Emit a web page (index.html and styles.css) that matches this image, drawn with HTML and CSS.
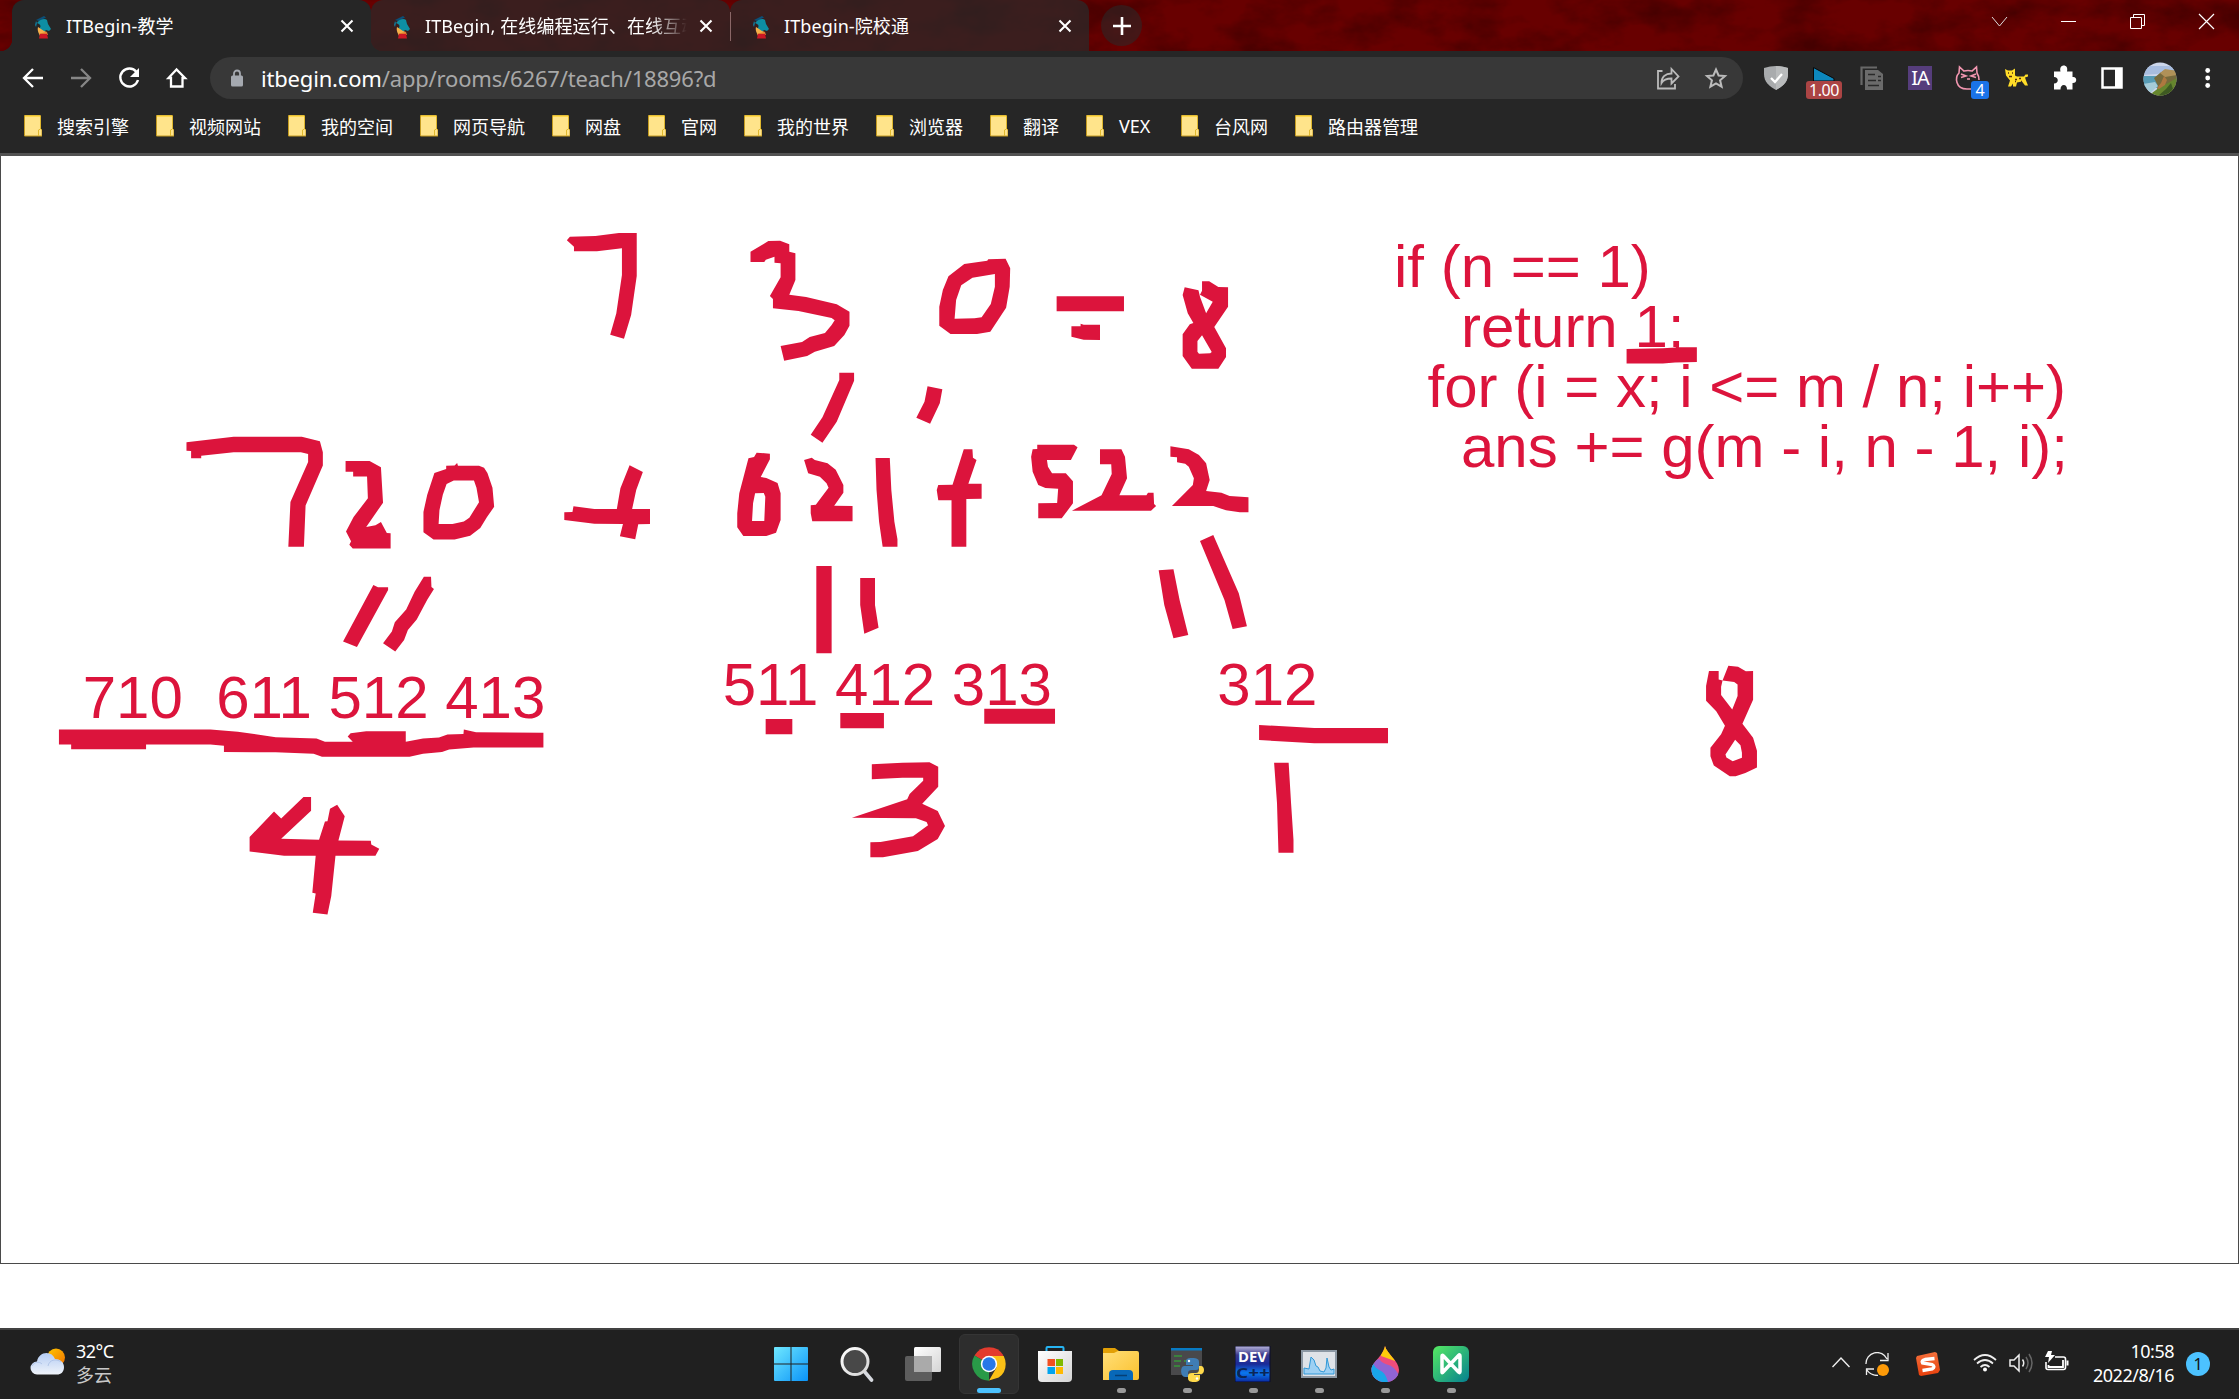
FILE: index.html
```html
<!DOCTYPE html>
<html lang="zh-CN">
<head>
<meta charset="utf-8">
<title>ITBegin-教学</title>
<link rel="stylesheet" href="styles.css">
</head>
<body>
<svg class="defs" width="0" height="0" aria-hidden="true">
  <defs>
    <linearGradient id="win" x1="0" y1="0" x2="1" y2="1"><stop offset="0" stop-color="#6fe8ff"/><stop offset="1" stop-color="#0a93f8"/></linearGradient>
    <linearGradient id="sun" x1="0" y1="0" x2="1" y2="1"><stop offset="0" stop-color="#ffc800"/><stop offset="1" stop-color="#f07000"/></linearGradient>
    <linearGradient id="cloud" x1="0" y1="0" x2="0" y2="1"><stop offset="0" stop-color="#b4ccf4"/><stop offset="1" stop-color="#f0f4fa"/></linearGradient>
    <linearGradient id="white" x1="0" y1="0" x2="1" y2="1"><stop offset="0" stop-color="#fff"/><stop offset="1" stop-color="#d4d4d4"/></linearGradient>
    <linearGradient id="folder" x1="0" y1="0" x2="1" y2="1"><stop offset="0" stop-color="#ffdf78"/><stop offset="1" stop-color="#fbc02d"/></linearGradient>
    <linearGradient id="dev" x1="0" y1="0" x2="0" y2="1"><stop offset="0" stop-color="#b9b6dc"/><stop offset=".25" stop-color="#3a3a8c"/><stop offset=".5" stop-color="#1a2a98"/><stop offset=".75" stop-color="#0a78f0"/><stop offset="1" stop-color="#0b2aa0"/></linearGradient>
    <linearGradient id="green" x1="0" y1="0" x2="1" y2="1"><stop offset="0" stop-color="#56ea62"/><stop offset="1" stop-color="#058090"/></linearGradient>
    <linearGradient id="sogou" x1="0" y1="0" x2="0" y2="1"><stop offset="0" stop-color="#f4703c"/><stop offset="1" stop-color="#e8400c"/></linearGradient>
    <symbol id="favicon" viewBox="0 0 18 24">
      <path d="M2 5 10 1l2 1.500L5 6z" fill="#0b4f78"/><path d="M3 8C6 4 11 3 13 5l1 4 3 5-2 2-3-1-2 2-5-3c2-2 2-4 0-5z" fill="#0d8ea3"/><path d="M2 6 1 10l1 2 1-4z" fill="#117a9c"/><path d="M4 12l6 4 3 1-1 4H6c-1-3-3-5-2-9z" fill="#f5b04a"/><path d="M5.500 18.500 13 17l1 3H6z" fill="#e2762c"/><path d="M6 19h7l1 4.500H5z" fill="#cc1725"/>
    </symbol>
    <symbol id="close" viewBox="0 0 14 14"><path d="M1.500 1.500l11 11m0-11-11 11" stroke="#fff" stroke-width="2.100"/></symbol>
    <symbol id="mark" viewBox="0 0 18 22"><path d="M.5.5h16v13l1.500 1.500v6H.5z" fill="#ffe48b" stroke="#c49b20"/><path d="M16.500 1v13l-2 1v6" stroke="#e0b82e" fill="none"/><path d="M1 1.200h15" stroke="#ffd94a" stroke-width="1.500"/></symbol>
  </defs>
</svg>

<header class="titlebar">
  <svg class="texture" width="2239" height="51">
    <filter id="grain" x="0" y="0" width="100%" height="100%">
      <feTurbulence type="fractalNoise" baseFrequency=".018 .03" numOctaves="5" seed="8"/>
      <feColorMatrix values="0 0 0 0 .06  0 0 0 0 0  0 0 0 0 0  2.200 0 0 0 -.9"/>
    </filter>
    <rect width="2239" height="51" fill="#680000"/>
    <rect width="2239" height="51" filter="url(#grain)"/>
  </svg>
  <nav class="tabs">
    <div class="tab active"><svg class="fav"><use href="#favicon"/></svg><span class="title">ITBegin-教学</span><svg class="x"><use href="#close"/></svg></div>
    <div class="tab"><svg class="fav"><use href="#favicon"/></svg><span class="title fade">ITBegin, 在线编程运行、在线互动</span><svg class="x"><use href="#close"/></svg></div>
    <div class="tab divided"><svg class="fav"><use href="#favicon"/></svg><span class="title">ITbegin-院校通</span><svg class="x"><use href="#close"/></svg></div>
    <span class="newtab"><svg width="18" height="18"><path d="M9 0v18M0 9h18" stroke="#fff" stroke-width="2.600"/></svg></span>
  </nav>
  <div class="controls">
    <svg width="69" height="44"><path d="M27 17l7.500 9 7.500-9" stroke="#ddd" fill="none"/></svg>
    <svg width="69" height="44"><path d="M27 21.500h15" stroke="#fff"/></svg>
    <svg width="69" height="44"><path d="M27.500 17.500h11v11h-11zM30.500 17v-2.500h11v11h-3" stroke="#fff" fill="none"/></svg>
    <svg width="69" height="44"><path d="M27 14l15 15M42 14 27 29" stroke="#fff" stroke-width="1.200"/></svg>
  </div>
</header>

<div class="toolbar">
  <svg width="48" height="48"><path d="M34 24H15m9-9-9 9 9 9" stroke="#fff" stroke-width="2.300" fill="none"/></svg>
  <svg width="48" height="48"><path d="M14 24h19m-9-9 9 9-9 9" stroke="#868686" stroke-width="2.300" fill="none"/></svg>
  <svg width="48" height="48"><path d="M31.500 18A9 9 0 1 0 33 26" stroke="#fff" stroke-width="2.400" fill="none"/><path d="M34 14v9h-9z" fill="#fff"/></svg>
  <svg width="48" height="48"><path d="M23.500 15.500 15.500 24H18v8.500h11.500V24H32z" stroke="#fff" stroke-width="2.300" fill="none"/></svg>
  <div class="omnibox">
    <svg width="12" height="18"><path d="M3 8V4.500a3 3 0 0 1 6 0V8" stroke="#a5a9b0" stroke-width="1.800" fill="none"/><rect y="6.500" width="12" height="11" rx="1.500" fill="#a5a9b0"/></svg>
    <span class="url"><b>itbegin.com</b>/app/rooms/6267/teach/18896?d</span>
    <svg width="48" height="42"><g transform="translate(2.500 0)"><path d="M13 14H8.500v17.500h17V27" stroke="#bbb" stroke-width="1.800" fill="none"/><path d="M12 26c0-6 4-9.500 10-9.500V12l7 7.500-7 7v-5c-5 0-8 1-10 4.500z" stroke="#bbb" stroke-width="1.800" fill="none"/></g></svg>
    <svg width="48" height="42"><path d="M21 12.500l2.600 6 6.400.6-4.900 4.200 1.500 6.400-5.600-3.400-5.600 3.400 1.500-6.400-4.900-4.200 6.400-.6z" stroke="#bbb" stroke-width="2" fill="none"/></svg>
  </div>
  <div class="extensions">
    <svg width="48" height="48"><path d="M12 14q12-4 24 0v6c0 8-5 12-12 16-7-4-12-8-12-16z" fill="#a9abad"/><path d="M24 12q6 0 12 2v6c0 8-5 12-12 16z" fill="#b9bbbc"/><path d="M19 24l4 4 7-8" stroke="#fff" stroke-width="2.300" fill="none"/></svg>
    <div class="ext"><svg width="48" height="48"><path d="M13.500 13.500 34 24.500V27H13.500z" fill="#0d87bd" stroke="#080808"/></svg><span class="badge red">1.00</span></div>
    <svg width="48" height="48"><path d="M13.500 31V13.500H29" stroke="#686868" stroke-width="2.200" fill="none"/><path d="M17 16h13l5 4v16H17z" fill="#6b6b6b"/><path d="M20 20.500h7m3 2h3M20 26.500h8m2 0h3M20 31.500h11" stroke="#292929" stroke-width="1.700"/></svg>
    <span class="ia">IA</span>
    <div class="ext"><svg width="48" height="48"><path d="M27 35h-4c-12 0-12-12-8-16l.5-6 4.500 4q4-1 8 0l4.500-4 .5 6q2 3 2 7M17 20l5 2-5 1.500m15-3.500-5 2 5 1.500m-9 1.500h3" stroke="#f296b0" stroke-width="1.600" fill="none"/></svg><span class="badge blue">4</span></div>
    <svg width="48" height="48"><path d="M13 15l3 1.500h4l3-2v7l2 1h7l1.500-2H36v2l-3 1 1 3 2 5h-3l-3-4-5 1-1 4h-3v-3l-2 3h-3l2-6-4-5z" fill="#ffdd28"/><path d="M16 19h1m3 0h1m-4 3.500h3m3 3h2m2-1h2m-6 3h1m5 0h1" stroke="#542e12" stroke-width="1.500"/></svg>
    <svg width="48" height="48"><path d="M13 17h6.500c-1-4 1-6 3.300-6s4.200 2 3.200 6h5.500v5.500c5-1 5 6.500 0 6V35h-5.500c0-3-1.200-4.500-3.200-4.500S19.500 32 19.500 35H13v-6c5 0 5-6.500 0-6.500z" fill="#fff" transform="translate(1 .5)"/></svg>
    <svg width="48" height="48"><path d="M14.500 14.500h19v19h-19z" stroke="#fff" stroke-width="2.500" fill="none"/><path d="M27 14h7v20h-7z" fill="#fff"/></svg>
    <svg width="48" height="48"><clipPath id="round"><circle cx="24" cy="25" r="16.500"/></clipPath><g clip-path="url(#round)"><path d="M7 8h34v34H7z" fill="#cdd6ea"/><path d="M7 12h34v4l-20 4-14 1z" fill="#a8bddf"/><path d="M7 22h20v12H7z" fill="#579cb6"/><path d="M7 30l12-2 3 4-9 8H7z" fill="#a5cbd8"/><path d="M18 24l6-5 5-3 12 1v28H18l4-13z" fill="#766a3c"/><path d="M24 19l5-4 12 2v4l-12 2z" fill="#b09158"/><path d="M12 42l12-9 8-4 9-5v18H11z" fill="#66862e"/><path d="M28 22l3 4-2 5-6 4-2-1 4-5z" fill="#ae783f"/><path d="M22 42l8-7 5-6 2 6-6 7z" fill="#3e5a22"/></g></svg>
    <svg width="48" height="48"><g fill="#fff"><circle cx="23.700" cy="16.500" r="2.400"/><circle cx="23.700" cy="24" r="2.400"/><circle cx="23.700" cy="31.500" r="2.400"/></g></svg>
  </div>
</div>

<nav class="bookmarks">
  <span><svg><use href="#mark"/></svg>搜索引擎</span>
  <span><svg><use href="#mark"/></svg>视频网站</span>
  <span><svg><use href="#mark"/></svg>我的空间</span>
  <span><svg><use href="#mark"/></svg>网页导航</span>
  <span><svg><use href="#mark"/></svg>网盘</span>
  <span><svg><use href="#mark"/></svg>官网</span>
  <span><svg><use href="#mark"/></svg>我的世界</span>
  <span><svg><use href="#mark"/></svg>浏览器</span>
  <span><svg><use href="#mark"/></svg>翻译</span>
  <span class="latin"><svg><use href="#mark"/></svg>VEX</span>
  <span><svg><use href="#mark"/></svg>台风网</span>
  <span><svg><use href="#mark"/></svg>路由器管理</span>
</nav>

<main class="page">
<svg class="board" viewBox="0 156 2239 1108" width="2239" height="1108">
  <g class="typed">
    <text x="1394" y="286.800">if (n == 1)</text>
    <text x="1461" y="346.800">return 1;</text>
    <text x="1427.500" y="406.800">for (i = x; i &lt;= m / n; i++)</text>
    <text x="1461" y="466.800">ans += g(m - i, n - 1, i);</text>
    <text x="82.700" y="718.300">710  611 512 413</text>
    <text x="722.700" y="705.300">511 412 313</text>
    <text x="1217.300" y="705.300">312</text>
  </g>
  <g class="ink" transform="translate(500 200) scale(.5102 .33333)">
    <path d="M131 121 137 110 187 108 233 99 268 99 268 228 257 345 243 416 216 404 228 340 239 225 239 145 190 154 145 154 145 140z"/>
    <path d="M491 155 510 138 526 123 549 122 567 133 567 155 579 160 579 240 567 284 600 291 660 313 685 335 685 377 675 405 655 438 617 455 602 468 557 482 550 438 592 426 607 411 637 399 650 375 656 361 650 354 585 333 535 325 535 297 529 288 550 232 550 190 538 188 538 170 521 179 518 186 491 186z"/>
    <path d="M957 178 991 176 1000 205 999 260 992 323 961 395 935 402 883 402 861 377 861 320 868 270 879 229 910 192 955 182zM970 222 926 233 904 256 894 300 891 356 930 355 944 352 962 312 970 260z"/>
    <path d="M1091 289H1223V334H1091zM1120 379 1138 379 1138 371 1144 374 1176 374 1176 420 1144 419 1120 410z"/>
    <path d="M1342 262 1369 271 1372 290 1384 340 1397 305 1372 284 1376 272 1376 244 1390 244 1408 261 1427 262 1427 320 1400 381 1423 445 1423 471 1408 506 1356 506 1338 468 1338 403 1352 373 1359 369 1348 340 1338 285zM1376 406 1367 423 1367 455 1370 461 1392 460 1395 456z"/>
    <path d="M665 518 694 518 694 542 660 665 632 728 609 704 632 652 665 540zM838 559 867 568 862 610 843 671 816 653 832 605z"/>
    <path d="M254 796 280 816 267 870 259 927 294 927 294 972 271 973 265 1018 235 1009 241 972 185 971 126 960 126 937 142 936 144 919 185 927 229 927 236 865z"/>
    <path d="M503 758 529 761 529 778 511 831 522 834 544 849 550 880 550 960 541 998 522 1008 477 1008 465 982 465 940 469 880 487 775 498 771zM500 880 517 879 520 890 518 963 494 963 496 910z"/>
    <path d="M596 780 611 773 617 780 642 790 658 809 673 855 673 878 655 917 691 918 691 964 612 964 609 940 609 916 619 914 644 863 640 850 627 830 604 820z"/>
    <path d="M736 774 764 774 767 870 773 965 779 1018 779 1040 750 1040 743 965 738 870z"/>
    <path d="M909 748 926 748 927 773 934 780 918 851 944 851 944 896 914 897 914 1040 885 1040 885 901 859 901 856 870 859 855 887 854z"/>
    <path d="M1053 734 1125 734 1132 742 1119 780 1072 780 1074 800 1082 820 1109 820 1123 844 1123 910 1101 955 1055 955 1055 910 1092 909 1094 866 1069 864 1055 855 1044 815 1041 770 1044 748 1053 747z"/>
    <path d="M1176 748 1218 748 1225 770 1229 835 1214 886 1267 886 1270 878 1281 878 1282 912 1286 918 1276 932 1121 932 1179 886 1199 822 1198 793 1176 793z"/>
    <path d="M1314 739 1350 748 1370 765 1384 790 1391 840 1384 873 1414 878 1430 888 1467 892 1467 937 1450 937 1423 931 1398 918 1317 918 1358 855 1360 835 1350 800 1343 791 1327 787 1327 772 1314 770z"/>
    <path d="M620 1098H650V1360H620zM706 1134 735 1134 735 1215 742 1283 714 1301 706 1215z"/>
    <path d="M1291 1111 1320 1108 1332 1200 1349 1305 1320 1315 1302 1215zM1372 1023 1398 1005 1448 1180 1464 1279 1436 1287 1420 1200z"/>
  </g>
  <g class="ink" transform="translate(40 400) scale(.42091 .34439)">
    <path d="M348 123 460 107 622 107 665 120 672 152 672 190 631 306 627 426 590 426 595 296 637 180 637 157 620 152 460 152 383 162 383 169 359 169 359 148 348 147z"/>
    <path d="M726 177 783 177 810 195 815 298 775 369 797 364 810 354 824 386 833 387 833 431 743 431 735 420 739 410 727 382 745 340 779 285 777 222 744 222 744 208 726 208z"/>
    <path d="M965 191 985 190 991 183 993 191 1043 191 1055 197 1063 212 1075 255 1079 310 1062 340 1046 372 1022 394 985 405 935 405 911 384 911 325 920 275 937 212 965 200zM983 234 1031 234 1037 255 1043 297 1020 342 1007 353 980 360 947 360 949 320 957 275 966 244z"/>
    <path d="M792 537 803 544 827 544 827 552 753 717 720 701zM912 513 929 513 930 543 936 549 920 580 895 637 874 668 865 697 844 730 815 706 836 672 843 645 870 608 890 557z"/>
    <path d="M45 957 405 957 470 963 560 979 657 983 677 992 743 992 731 977 738 968 775 962 869 962 869 992 910 983 948 980 968 971 1006 970 1007 957 1036 965 1196 966 1196 1009 1030 1009 972 1015 955 1022 910 1027 878 1036 670 1036 650 1027 560 1023 437 1022 437 1004 405 1000 252 1000 252 1014 74 1014 74 1000 45 1000z"/>
    <path d="M626 1153 644 1153 644 1193 573 1274 663 1277 677 1224 683 1223 689 1187 706 1175 724 1209 709 1279 786 1280 787 1291 806 1303 797 1323 702 1323 692 1440 683 1494 648 1489 655 1433 647 1431 655 1323 580 1323 498 1311 498 1269 556 1195 573 1215z"/>
  </g>
  <g class="ink" transform="translate(660 500) scale(.48469 .33333)">
    <path d="M218 657H273V703H218zM372 639H462V685H372zM669 626H815V671H669z"/>
    <path d="M1236 675 1350 684 1502 684 1502 730 1350 730 1236 720z"/>
    <path d="M437 793 500 788 556 787 574 800 574 860 541 911 573 933 588 978 573 1017 532 1053 460 1072 434 1072 434 1027 455 1026 522 1009 553 976 550 966 528 955 396 953 510 898 515 882 543 842 543 833 500 833 437 838z"/>
    <path d="M1267 788 1297 788 1302 910 1307 1020 1307 1058 1276 1058 1273 910z"/>
  </g>
  <g class="ink" transform="translate(1360 220) scale(.48469 .3699)">
    <path d="M550 349 625 347 660 344 695 344 695 384 650 385 625 388 550 388z"/>
    <path d="M720 1219 740 1219 740 1242 748 1245 760 1205 780 1208 796 1220 811 1219 811 1297 789 1362 811 1400 819 1435 819 1480 795 1495 775 1504 763 1504 730 1475 723 1450 723 1427 745 1390 753 1367 735 1328 714 1300 714 1260zM748 1245 772 1249 779 1256 779 1287 768 1323 745 1284 745 1262zM774 1405 754 1445 756 1453 769 1463 788 1454 788 1440 785 1420z"/>
  </g>
</svg>
</main>

<footer class="taskbar">
  <div class="weather">
    <svg width="36" height="28"><circle cx="26" cy="9.500" r="9" fill="url(#sun)"/><path d="M7 26.500a6.500 6.500 0 0 1 0-13C8 8 12 5 16.500 5c4 0 7 2 8.500 6 5 0 9 3 9 8s-3 7.500-7 7.500z" fill="url(#cloud)"/><path d="M2 18c2-4 7-5 10-2m6 2c1-6 8-8 13-4" stroke="#a9bfe4" stroke-width=".8" fill="none"/></svg>
    <div class="lines"><span>32°C</span><span class="dim">多云</span></div>
  </div>
  <div class="apps">
    <div class="app"><svg width="36" height="36"><path d="M1 2q0-1 1-1h15.500v16.500H1zM18.500 1H34q1 0 1 1v15.500H18.500zM1 18.500h16.500V35H2q-1 0-1-1zM18.500 18.500H35V34q0 1-1 1H18.500z" fill="url(#win)"/></svg></div>
    <div class="app"><svg width="36" height="36"><path d="M25 25l7.500 9" stroke="#d6d9df" stroke-width="3.600" stroke-linecap="round"/><circle cx="16" cy="15.500" r="13" fill="#484848" stroke="url(#white)" stroke-width="3"/></svg></div>
    <div class="app"><svg width="36" height="36"><rect x="0" y="10" width="27" height="25" rx="2" fill="#5d5d5d"/><rect x="9" y="1" width="27" height="25" rx="1.500" fill="url(#white)"/><path d="M9 10h18v16H9z" fill="#aaa"/></svg></div>
    <div class="app current"><svg width="36" height="36"><path d="M18 18 3.500 9.600A16.700 16.700 0 0 1 32.500 9.600z" fill="#e33b2e"/><path d="M18 18v16.700A16.700 16.700 0 0 1 3.500 9.600z" fill="#299a48"/><path d="M18 10h14.700q2 4 2 8 0 9-7 13.500L18 34.500l7.500-13z" fill="#fbc116"/><circle cx="18" cy="18" r="8.200" fill="#fff"/><circle cx="18" cy="18" r="6.700" fill="#2878e8"/></svg></div>
    <div class="app"><svg width="36" height="36"><path d="M9.500 7V2q0-1 1-1h15q1 0 1 1v5" stroke="#26b4f2" stroke-width="2" fill="none"/><path d="M1 5h34v27q0 4-4 4H5q-4 0-4-4z" fill="url(#white)"/><path d="M10.500 13H18v7h-7.500z" fill="#f25022"/><path d="M19 13h7v7h-7z" fill="#7fba00"/><path d="M10.500 21H18v7h-7.500z" fill="#00a4ef"/><path d="M19 21h7v7h-7z" fill="#ffb900"/></svg></div>
    <div class="app open"><svg width="36" height="36"><path d="M0 3q0-1 1-1h11l4 3v5H0z" fill="#e2a006"/><path d="M0 7h11l4-2h19q2 0 2 2v25q0 2-2 2H0z" fill="url(#folder)"/><path d="M6 34v-6q0-4 4-4h16q4 0 4 4v6z" fill="#0868b8"/><path d="M12 29.500h12" stroke="#053f75" stroke-width="1.500"/></svg></div>
    <div class="app open"><svg width="36" height="36"><path d="M2 2h31v27H2z" fill="#49494b"/><path d="M2 2h31v2.500H2z" fill="#087bc4"/><path d="M5 10h8M5 15h7m3 0h3M5 20h6" stroke="#37953a" stroke-width="1.500"/><path d="M23 12c-6 0-6 2-6 4v3h7v1h-9c-4 0-4 11 1 11h3v-4q0-3 4-3h4q3 0 3-3v-5c0-3-2-4-7-4z" fill="#3f7db4"/><path d="M25 36c5 0 6-2 6-4v-3h-6v-1h7c4 0 4-8 0-8h-2v3q0 4-3 4h-4q-4 0-4 3v2c0 3 2 4 6 4z" fill="#ffd94b"/><circle cx="20" cy="15" r="1.200" fill="#fff"/><circle cx="28" cy="32.500" r="1.200" fill="#fff"/></svg></div>
    <div class="app open"><svg width="36" height="36"><rect width="35" height="36" fill="url(#dev)" stroke="#0a0d2c"/><text x="17.500" y="15.500" class="devname" textLength="29" lengthAdjust="spacingAndGlyphs">DEV</text><text x="18" y="32" class="devlang" textLength="34" lengthAdjust="spacingAndGlyphs">C++</text></svg></div>
    <div class="app open"><svg width="36" height="36"><path d="M1 5h34v26H1z" fill="#dfe3e8" stroke="#8c98a4" stroke-width="2"/><path d="M3 28v-6l5 1 2-12 3 3 2 6 2 1 2 4 4 1 2-4 1-10 2 9 2 3 3-1v5z" fill="#9dd0f3" stroke="#3098d7"/></svg></div>
    <div class="app open"><svg width="36" height="36"><clipPath id="drop"><path d="M18 0C20 8 32 15 32 24a13.500 12 0 0 1-27.500 0C4.500 16 15 12 18 0z"/></clipPath><g clip-path="url(#drop)"><path d="M0 0h36v36H0z" fill="#ef4d7c"/><path d="M15 0h8l5 15-14-5z" fill="#ffcc0a"/><path d="M0 17 12 13c6 8 12 3 18 13l6 10H0z" fill="#9064d4"/><path d="M0 17h6c4 10 11 4 15 19H0z" fill="#19a6ea"/></g></svg></div>
    <div class="app open"><svg width="36" height="36"><rect width="36" height="36" rx="6" fill="url(#green)"/><path d="M9 26V10q0-1.500 1.500 0l15 16q1.500 1.500 1.500-.5V10q0-2-1.500-.5l-15 16Q9 27.500 9 26z" stroke="#fff" stroke-width="3.500" fill="none"/></svg></div>
  </div>
  <div class="tray">
    <svg width="18" height="12"><path d="M.5 11 9 2l8.500 9" stroke="#eee" stroke-width="1.400" fill="none"/></svg>
    <svg width="24" height="24" class="sync"><path d="M1 12A11 11 0 0 1 22 7M15 8.500h8V1M1 17h8m-7.500-.5V23m0-5.500q4 6 11.500 6" stroke="#eee" stroke-width="1.300" fill="none"/><circle cx="18" cy="18" r="6" fill="#fd9a08"/></svg>
    <svg width="24" height="24" class="sogou"><path d="M1 4 19 0l2 1 3 17-2 3L5 24l-2-1L0 6z" fill="url(#sogou)"/><path d="M18.500 6.500 9 7.500q-4 1-2.500 3.500l9.500 1.500q4 2 0 4.500l-9.500 1.500" stroke="#fff" stroke-width="3.300" fill="none"/></svg>
    <svg width="24" height="18" class="wifi"><path d="M1 6Q12-4 23 6M4 9.500q8-7 16 0M7.500 13q4.500-4 9 0" stroke="#eee" stroke-width="1.700" fill="none"/><circle cx="12" cy="15.500" r="2" fill="#fff"/></svg>
    <svg width="24" height="20" class="volume"><path d="M1 7h4l5-5v16l-5-5H1z" stroke="#eee" stroke-width="1.500" fill="none"/><path d="M13.500 6.500q2.500 3.500 0 7" stroke="#eee" stroke-width="1.500" fill="none"/><path d="M17 4q4 6 0 12M20 1q6 9 0 18" stroke="#666" stroke-width="1.500" fill="none"/></svg>
    <svg width="24" height="21" class="battery"><path d="M10 6h8.500q2 0 2 2v8.500q0 2-2 2H3q-2 0-2-2V11" stroke="#fff" stroke-width="1.600" fill="none"/><path d="M3.500 14v2h14.500v-7" stroke="#fff" stroke-width="1.800" fill="none"/><path d="M22.500 9.500v5" stroke="#fff" stroke-width="2"/><path d="M3 0h4L6 4h4L3 12l1-6H0z" fill="#fff"/></svg>
    <div class="clock lines"><span>10:58</span><span>2022/8/16</span></div>
    <span class="count">1</span>
  </div>
</footer>
</body>
</html>
```
FILE: styles.css
```css
* { box-sizing: border-box; }

body {
  margin: 0;
  width: 2239px;
  height: 1399px;
  display: flex;
  flex-direction: column;
  overflow: hidden;
  background: #fff;
  color: #fff;
  font: 18px "Noto Sans", "Noto Sans CJK SC", sans-serif;
}

svg { display: block; flex: none; }
.defs { position: absolute; }

/* Title bar and tabs */
.titlebar {
  position: relative;
  height: 51px;
  display: flex;
  justify-content: space-between;
  overflow: hidden;
}
.texture { position: absolute; left: 0; top: 0; }
.tabs { position: relative; display: flex; padding-left: 12px; }
.tab {
  position: relative;
  width: 359px;
  display: flex;
  align-items: center;
  padding: 0 17px 0 22px;
  border-radius: 12px 12px 0 0;
  background: rgba(41, 41, 41, .72);
}
.tab.active { background: #262626; z-index: 1; }
.tab.active::before,
.tab.active::after {
  content: "";
  position: absolute;
  bottom: 0;
  width: 12px;
  height: 12px;
}
.tab.active::before { left: -12px; background: radial-gradient(circle at 0 0, transparent 12px, #262626 12.5px); }
.tab.active::after { right: -12px; background: radial-gradient(circle at 100% 0, transparent 12px, #262626 12.5px); }
.tab.divided::before {
  content: "";
  position: absolute;
  left: 0;
  top: 12px;
  width: 1px;
  height: 29px;
  background: #8a6767;
}
.fav { width: 18px; height: 24px; margin: 2px 14px 0 0; }
.title { flex: 1; overflow: hidden; white-space: nowrap; letter-spacing: .1px; padding-bottom: 1px; }
.title.fade { mask-image: linear-gradient(90deg, #000 86%, transparent); }
.x { width: 14px; height: 14px; margin-left: 12px; }
.newtab {
  width: 41px;
  height: 41px;
  margin: 5px 0 0 12px;
  border-radius: 50%;
  background: rgba(41, 41, 41, .55);
  display: grid;
  place-items: center;
}
.controls { position: relative; display: flex; margin-right: -2px; }

/* Navigation row */
.toolbar {
  height: 54px;
  display: flex;
  align-items: center;
  padding-left: 9px;
  background: #262626;
}
.omnibox {
  width: 1533px;
  height: 42px;
  margin: 0 9px;
  padding: 0 0 0 21px;
  border-radius: 21px;
  background: #383838;
  display: flex;
  align-items: center;
}
.url { flex: 1; margin-left: 18px; padding-bottom: 1px; font-size: 22px; letter-spacing: -.18px; color: #a8a8a8; }
.url b { font-weight: 400; color: #fff; }
.extensions { display: flex; align-items: center; }
.ext { position: relative; }
.badge {
  position: absolute;
  top: 27px;
  height: 18px;
  border-radius: 3px;
  font-size: 16px;
  line-height: 18px;
  letter-spacing: -.4px;
  text-align: center;
}
.badge.red { left: 6px; width: 36px; background: #ab4444; }
.badge.blue { left: 27px; width: 18px; background: #1a73e8; }
.ia {
  width: 24px;
  height: 24px;
  margin: 0 12px;
  background: #563d7c;
  font-size: 20px;
  line-height: 24px;
  letter-spacing: -1px;
  text-align: center;
}

/* Bookmarks */
.bookmarks {
  height: 51px;
  display: flex;
  align-items: center;
  gap: 27px;
  padding: 0 0 7px 24px;
  border-bottom: 3px solid #525252;
  background: #262626;
  white-space: nowrap;
}
.bookmarks span { display: flex; align-items: center; height: 26px; }
.bookmarks svg { width: 18px; height: 22px; margin-right: 15px; }
.bookmarks .latin { width: 68px; }

/* Whiteboard */
.page { height: 1172px; background: #fff; }
.board {
  box-shadow: inset 1px 0 #4a4a4a, inset -1px 0 #4a4a4a, inset 0 -1px #4a4a4a;
}
.typed {
  fill: #dc143c;
  font: 60px "Liberation Sans", Arial, sans-serif;
  white-space: pre;
}
.typed text { white-space: pre; }
.ink { fill: #dc143c; fill-rule: evenodd; }

/* Taskbar */
.taskbar {
  height: 71px;
  display: grid;
  grid-template-columns: 758px 726px 1fr;
  border-top: 2px solid #414141;
  background: #202020;
}
.weather { display: flex; padding: 14px 0 0 30px; }
.weather svg { margin: 4px 10px 0 0; }
.lines { display: flex; flex-direction: column; line-height: 24px; letter-spacing: -.5px; }
.weather .lines, .clock { margin-top: -5px; }
.dim { color: #c8c8c8; letter-spacing: 0; }
.apps { display: flex; }
.app {
  position: relative;
  width: 60px;
  height: 60px;
  margin: 4px 3px;
  display: grid;
  place-items: center;
  border-radius: 6px;
}
.app.current { background: #2d2d2d; border: 1px solid #353535; }
.app.open::after,
.app.current::after {
  content: "";
  position: absolute;
  left: 50%;
  bottom: 1px;
  width: 9px;
  height: 5px;
  margin-left: -4.5px;
  border-radius: 3px;
  background: #999;
}
.app.current::after { width: 24px; margin-left: -12px; bottom: 0; background: #4cc2ff; }
.devname { fill: #fff; font: 700 15px "Open Sans", sans-serif; text-anchor: middle; }
.devlang { fill: #0b2656; font: 700 15px "Open Sans", sans-serif; text-anchor: middle; }
.tray { display: flex; align-items: flex-start; padding: 14px 0 0 348px; }
.tray > svg:first-child { margin-top: 12px; }
.sync { margin: 8px 0 0 15px; }
.sogou { margin: 8px 0 0 27px; }
.wifi { margin: 10px 0 0 33px; }
.volume { margin: 9px 0 0 12px; }
.battery { margin: 7px 0 0 12px; }
.clock { width: 105px; text-align: right; }
.count {
  width: 24px;
  height: 24px;
  margin: 8px 0 0 12px;
  border-radius: 50%;
  background: #4cc2ff;
  color: #111;
  font-size: 16px;
  line-height: 24px;
  text-align: center;
}
```
